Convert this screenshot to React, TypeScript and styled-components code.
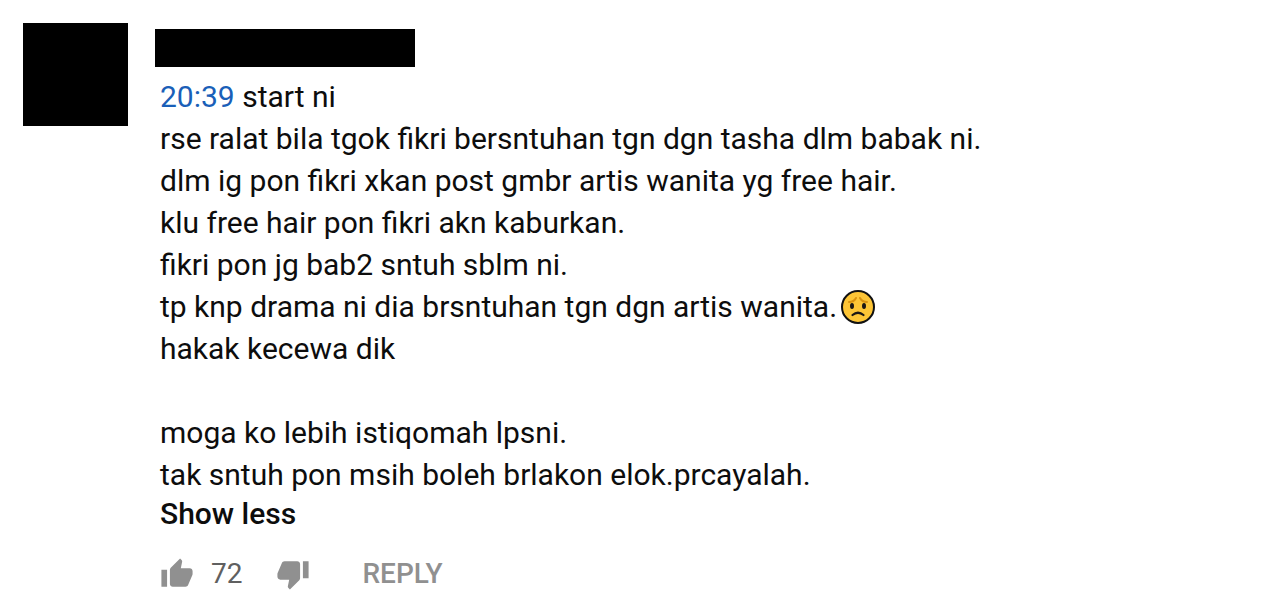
import React from "react";
import styled, { createGlobalStyle } from "styled-components";

const GlobalStyle = createGlobalStyle`
  * { box-sizing: border-box; }
  body { margin: 0; background: #fff; color: #0d0d0d; font-family: Roboto, sans-serif; }
`;

const Comment = styled.article`
  display: flex;
  align-items: flex-start;
  gap: 27px;
  padding: 23px 24px 0 23px;
`;

const Avatar = styled.div`
  flex: none;
  width: 105px;
  height: 103px;
  background: #000;
`;

const Main = styled.div`
  flex: 1;
  min-width: 0;
  padding-top: 6px;
`;

const AuthorName = styled.div`
  width: 260px;
  height: 38px;
  background: #000;
`;

const Body = styled.div`
  padding: 9px 0 0 5px;
`;

const Line = styled.p`
  min-height: 42px;
  margin: 0;
  font-size: 30px;
  line-height: 42px;
  white-space: pre-wrap;
`;

const TimeLink = styled.a`
  color: #1a5fb8;
  text-decoration: none;
`;

const Emoji = styled.svg`
  width: 36px;
  height: 36px;
  margin-left: 3px;
  vertical-align: -8px;
`;

const Button = styled.button`
  display: flex;
  align-items: center;
  padding: 0;
  border: 0;
  background: none;
  color: #909090;
  font: 500 28px/34px Roboto, sans-serif;
  cursor: pointer;
`;

const ShowLess = styled(Button)`
  margin-top: 1px;
  color: #0d0d0d;
  font-size: 30px;
`;

const Actions = styled.div`
  display: flex;
  align-items: center;
  margin-top: 26px;
`;

const Icon = styled.svg`
  width: 34px;
  height: 34px;
  fill: #909090;
`;

const Count = styled.span`
  margin: 0 34px 0 17px;
  color: #606060;
  font-size: 28px;
  line-height: 34px;
`;

const Reply = styled(Button)`
  margin-left: 52px;
`;

function WorriedFace() {
  return (
    <Emoji viewBox="0 0 36 36" role="img" aria-label="worried face">
      <circle cx="18" cy="18" r="16" fill="#fdc536" stroke="#111" strokeWidth="2" />
      <path
        d="M9 13q5 0 7-4M27 13q-5 0-7-4"
        fill="none"
        stroke="#d9920f"
        strokeWidth="2"
        strokeLinecap="round"
      />
      <ellipse cx="12" cy="17" rx="2" ry="3" fill="#1c1715" />
      <ellipse cx="24" cy="17" rx="2" ry="3" fill="#1c1715" />
      <path
        d="M12.500 26Q18 21.500 23.500 26"
        fill="none"
        stroke="#1c1715"
        strokeWidth="2.200"
        strokeLinecap="round"
      />
    </Emoji>
  );
}

export default function App() {
  return (
    <>
      <GlobalStyle />
      <Comment>
        <Avatar />
        <Main>
          <AuthorName />
          <Body>
            <Line>
              <TimeLink href="#t=20m39s">20:39</TimeLink>
              <span> start ni</span>
            </Line>
            <Line>rse ralat bila tgok fikri bersntuhan tgn dgn tasha dlm babak ni.</Line>
            <Line>dlm ig pon fikri xkan post gmbr artis wanita yg free hair.</Line>
            <Line>klu free hair pon fikri akn kaburkan.</Line>
            <Line>fikri pon jg bab2 sntuh sblm ni.</Line>
            <Line>
              tp knp drama ni dia brsntuhan tgn dgn artis wanita.
              <WorriedFace />
            </Line>
            <Line>hakak kecewa dik</Line>
            <Line />
            <Line>moga ko lebih istiqomah lpsni.</Line>
            <Line>tak sntuh pon msih boleh brlakon elok.prcayalah.</Line>
            <ShowLess type="button">Show less</ShowLess>
            <Actions>
              <Button type="button" aria-label="Like">
                <Icon viewBox="0 0 24 24">
                  <path d="M1 21h4V9H1v12zm22-11c0-1.1-.9-2-2-2h-6.310l.95-4.570.03-.32c0-.41-.17-.79-.44-1.060L14.170 1 7.590 7.590C7.220 7.950 7 8.450 7 9v10c0 1.1.9 2 2 2h9c.83 0 1.540-.5 1.840-1.220l3.020-7.050c.09-.23.14-.47.14-.73v-2z" />
                </Icon>
              </Button>
              <Count>72</Count>
              <Button type="button" aria-label="Dislike">
                <Icon viewBox="0 0 24 24">
                  <path d="M15 3H6c-.83 0-1.540.5-1.840 1.220l-3.020 7.050c-.09.23-.14.47-.14.73v2c0 1.1.9 2 2 2h6.310l-.95 4.570-.03.32c0 .41.17.79.44 1.060L9.830 23l6.590-6.590c.36-.36.58-.86.58-1.410V5c0-1.1-.9-2-2-2zm4 0v12h4V3h-4z" />
                </Icon>
              </Button>
              <Reply type="button">REPLY</Reply>
            </Actions>
          </Body>
        </Main>
      </Comment>
    </>
  );
}
